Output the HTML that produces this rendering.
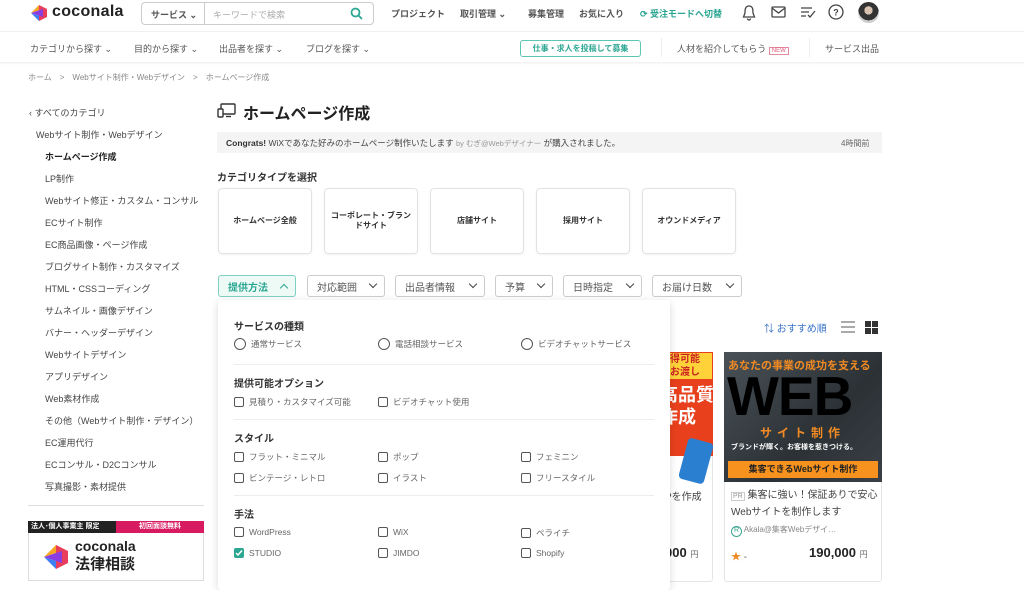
<!DOCTYPE html>
<html><head><meta charset="utf-8"><style>
*{margin:0;padding:0;box-sizing:border-box}
body{width:1024px;height:571px;overflow:hidden;background:#fff;font-family:"Liberation Sans","Noto Sans CJK JP",sans-serif;color:#333;position:relative}
.a{position:absolute;white-space:nowrap}
.s{font-size:9px}
.g{color:#555}
.b{font-weight:bold}
.side{font-size:9px;color:#444}
.tile{position:absolute;top:188px;width:94px;height:66px;border:1px solid #e2e2e2;border-radius:4px;font-size:8px;font-weight:bold;display:flex;align-items:center;justify-content:center;text-align:center;line-height:1.3;box-shadow:0 1px 2px rgba(0,0,0,.05)}
.flt{position:absolute;top:275px;height:22px;border:1px solid #ccc;border-radius:3px;font-size:10px;color:#555;display:flex;align-items:center;padding-left:9px}
.flt i{position:absolute;right:8px;top:5px;width:6px;height:6px;border-right:1.6px solid #444;border-bottom:1.6px solid #444;transform:rotate(45deg)}
.h{position:absolute;font-size:10px;font-weight:bold;color:#333}
.o{position:absolute;font-size:8.5px;color:#666;display:flex;align-items:center;white-space:nowrap}
.o b{display:inline-block;width:10px;height:10px;border:1.4px solid #555;border-radius:2px;margin-right:5px}
.o u{display:inline-block;width:12px;height:12px;border:1.4px solid #555;border-radius:50%;margin-right:5px}
.hr{position:absolute;left:234px;width:420px;height:1px;background:#eee}
</style></head><body>
<!-- header -->
<svg class="a" style="left:29px;top:4px" width="20" height="18" viewBox="0 0 20 18"><path d="M2 9 L10 1 L14 5 Z" fill="#f5a623"/><path d="M2 9 L10 17 L14 13 Z" fill="#3b7ff0"/><path d="M10 1 L18 5 L18 13 L10 17 Z" fill="#e83e5b"/><path d="M2 9 L14 5 L14 13Z" fill="#8a3de0"/></svg>
<div class="a" style="left:52px;top:3px;font-size:16px;font-weight:bold;color:#222;letter-spacing:.3px">coconala</div>
<div class="a" style="left:141px;top:2px;width:233px;height:23px;border:1px solid #ccc;border-radius:4px"></div>
<div class="a" style="left:204px;top:3px;width:1px;height:21px;background:#ccc"></div>
<div class="a s b g" style="left:151px;top:8px">サービス ⌄</div>
<div class="a s" style="left:213px;top:8px;color:#aaa">キーワードで検索</div>
<svg class="a" style="left:350px;top:7px" width="13" height="13" viewBox="0 0 13 13"><circle cx="5.5" cy="5.5" r="4" stroke="#2aa692" stroke-width="1.8" fill="none"/><path d="M8.5 8.5 L12 12" stroke="#2aa692" stroke-width="1.8"/></svg>
<div class="a s b g" style="left:391px;top:7px">プロジェクト</div>
<div class="a s b g" style="left:460px;top:7px">取引管理 ⌄</div>
<div class="a s b g" style="left:528px;top:7px">募集管理</div>
<div class="a s b g" style="left:579px;top:7px">お気に入り</div>
<div class="a s b" style="left:640px;top:7px;color:#2aa692">⟳ 受注モードへ切替</div>
<svg class="a" style="left:742px;top:5px" width="14" height="16" viewBox="0 0 14 16"><path d="M7 1 C3 1 3 5 3 8 L1.5 12 H12.5 L11 8 C11 5 11 1 7 1Z M5.5 13.5 A1.5 1.5 0 0 0 8.5 13.5" stroke="#444" stroke-width="1.3" fill="none"/></svg>
<svg class="a" style="left:771px;top:6px" width="15" height="12" viewBox="0 0 15 12"><rect x="1" y="1" width="13" height="10" rx="1" stroke="#444" stroke-width="1.3" fill="none"/><path d="M1 2 L7.5 7 L14 2" stroke="#444" stroke-width="1.3" fill="none"/></svg>
<svg class="a" style="left:800px;top:6px" width="16" height="12" viewBox="0 0 16 12"><path d="M1 2H12M1 6H9M1 10H6M8 9L10 11L15 5" stroke="#444" stroke-width="1.3" fill="none"/></svg>
<svg class="a" style="left:828px;top:4px" width="16" height="16" viewBox="0 0 16 16"><circle cx="8" cy="8" r="7" stroke="#444" stroke-width="1.3" fill="none"/><text x="8" y="11.5" font-size="9" text-anchor="middle" fill="#444" font-family="Liberation Sans" font-weight="bold">?</text></svg>
<div class="a" style="left:858px;top:2px;width:21px;height:21px;border-radius:50%;background:radial-gradient(circle at 50% 40%,#d9c3b0 0 25%,#333 26% 60%,#ccc 61%)"></div>
<div class="a" style="left:0;top:31px;width:1024px;height:1px;background:#f0f0f0"></div>
<div class="a s g" style="left:30px;top:42px">カテゴリから探す ⌄</div>
<div class="a s g" style="left:134px;top:42px">目的から探す ⌄</div>
<div class="a s g" style="left:219px;top:42px">出品者を探す ⌄</div>
<div class="a s g" style="left:306px;top:42px">ブログを探す ⌄</div>
<div class="a" style="left:520px;top:40px;width:121px;height:17px;border:1.2px solid #5cc6b4;border-radius:3px;font-size:8px;font-weight:bold;color:#2aa692;text-align:center;line-height:15px">仕事・求人を投稿して募集</div>
<div class="a" style="left:661px;top:38px;width:1px;height:19px;background:#eee"></div>
<div class="a s g" style="left:677px;top:42px">人材を紹介してもらう <span style="font-size:6px;color:#e05a7a;border:1px solid #e58aa0;padding:0 2px">NEW</span></div>
<div class="a" style="left:809px;top:38px;width:1px;height:19px;background:#eee"></div>
<div class="a s g" style="left:825px;top:42px">サービス出品</div>
<div class="a" style="left:0;top:62px;width:1024px;height:3px;background:linear-gradient(#f0f0f0,#fff)"></div>
<div class="a" style="left:28px;top:72px;font-size:8px;color:#888">ホーム　&gt;　Webサイト制作・Webデザイン　&gt;　ホームページ作成</div>
<!-- sidebar -->
<div class="a side" style="left:29px;top:106px">‹ すべてのカテゴリ</div>
<div class="a side" style="left:36px;top:128px">Webサイト制作・Webデザイン</div>
<div class="a side b" style="left:45px;top:150px;color:#222">ホームページ作成</div>
<div class="a side" style="left:45px;top:172px">LP制作</div>
<div class="a side" style="left:45px;top:194px">Webサイト修正・カスタム・コンサル</div>
<div class="a side" style="left:45px;top:216px">ECサイト制作</div>
<div class="a side" style="left:45px;top:238px">EC商品画像・ページ作成</div>
<div class="a side" style="left:45px;top:260px">ブログサイト制作・カスタマイズ</div>
<div class="a side" style="left:45px;top:282px">HTML・CSSコーディング</div>
<div class="a side" style="left:45px;top:304px">サムネイル・画像デザイン</div>
<div class="a side" style="left:45px;top:326px">バナー・ヘッダーデザイン</div>
<div class="a side" style="left:45px;top:348px">Webサイトデザイン</div>
<div class="a side" style="left:45px;top:370px">アプリデザイン</div>
<div class="a side" style="left:45px;top:392px">Web素材作成</div>
<div class="a side" style="left:45px;top:414px">その他（Webサイト制作・デザイン）</div>
<div class="a side" style="left:45px;top:436px">EC運用代行</div>
<div class="a side" style="left:45px;top:458px">ECコンサル・D2Cコンサル</div>
<div class="a side" style="left:45px;top:480px">写真撮影・素材提供</div>
<div class="a" style="left:28px;top:505px;width:176px;height:1px;background:#ddd"></div>
<div class="a" style="left:28px;top:521px;width:176px;height:60px;border:1px solid #ddd"></div>
<div class="a" style="left:28px;top:521px;width:88px;height:12px;background:#222;color:#fff;font-size:7px;font-weight:bold;padding-left:3px;line-height:12px">法人･個人事業主 限定</div>
<div class="a" style="left:116px;top:521px;width:88px;height:12px;background:#d81b60;color:#fff;font-size:7px;font-weight:bold;text-align:center;line-height:12px">初回面談無料</div>
<svg class="a" style="left:41px;top:542px" width="30" height="30" viewBox="0 0 20 18"><path d="M2 9 L10 1 L14 5 Z" fill="#f5a623"/><path d="M2 9 L10 17 L14 13 Z" fill="#3b7ff0"/><path d="M10 1 L18 5 L18 13 L10 17 Z" fill="#e83e5b"/><path d="M2 9 L14 5 L14 13Z" fill="#8a3de0"/></svg>
<div class="a" style="left:75px;top:538px;font-size:14px;font-weight:bold;color:#222">coconala</div>
<div class="a" style="left:75px;top:553px;font-size:15px;font-weight:bold;color:#222">法律相談</div>
<!-- main -->
<svg class="a" style="left:217px;top:103px" width="19" height="15" viewBox="0 0 19 15"><rect x="4" y="1" width="14" height="10" rx="1" stroke="#333" stroke-width="1.4" fill="none"/><rect x="1" y="6" width="5" height="8" rx="1" stroke="#333" stroke-width="1.4" fill="#fff"/><path d="M9 13.5H14" stroke="#333" stroke-width="1.4"/></svg>
<div class="a" style="left:243px;top:100px;font-size:16px;font-weight:bold;color:#222">ホームページ作成</div>
<div class="a" style="left:217px;top:132px;width:665px;height:21px;background:#f4f4f4"></div>
<div class="a" style="left:226px;top:137px;font-size:8.5px;color:#444"><b style="color:#333">Congrats!</b> WiXであなた好みのホームページ制作いたします <span style="color:#999;font-size:7.5px">by むぎ@Webデザイナー</span> が購入されました。</div>
<div class="a" style="left:841px;top:138px;font-size:8px;color:#666">4時間前</div>
<div class="a" style="left:217px;top:169px;font-size:10px;font-weight:bold;color:#333">カテゴリタイプを選択</div>
<div class="tile" style="left:218px">ホームページ全般</div>
<div class="tile" style="left:324px">コーポレート・ブラン<br>ドサイト</div>
<div class="tile" style="left:430px">店舗サイト</div>
<div class="tile" style="left:536px">採用サイト</div>
<div class="tile" style="left:642px">オウンドメディア</div>
<div class="flt" style="left:218px;width:78px;background:#eefaf6;border-color:#7fd0c0;color:#2aa692;font-weight:bold">提供方法<i style="transform:rotate(-135deg);top:9px;border-color:#2aa692"></i></div>
<div class="flt" style="left:307px;width:78px">対応範囲<i></i></div>
<div class="flt" style="left:395px;width:90px">出品者情報<i></i></div>
<div class="flt" style="left:495px;width:58px">予算<i></i></div>
<div class="flt" style="left:563px;width:79px">日時指定<i></i></div>
<div class="flt" style="left:652px;width:90px">お届け日数<i></i></div>
<!-- sort -->
<div class="a" style="left:764px;top:320px;font-size:10px;color:#3a74c9">⇅ おすすめ順</div>
<div class="a" style="left:841px;top:321px;width:14px;height:12px;background:repeating-linear-gradient(#aaa 0 2px,transparent 2px 5px)"></div>
<div class="a" style="left:865px;top:321px;width:13px;height:13px;background:linear-gradient(90deg,#333 0 6px,transparent 6px 7px,#333 7px),#333;"><div style="position:absolute;left:6px;top:0;width:1px;height:13px;background:#fff"></div><div style="position:absolute;left:0;top:6px;width:13px;height:1px;background:#fff"></div></div>
<!-- cards -->
<div class="a" style="left:600px;top:352px;width:113px;height:230px;border:1px solid #e5e5e5;border-radius:3px"></div>
<div class="a" style="left:600px;top:352px;width:113px;height:104px;background:#e8401c"></div>
<div class="a" style="left:660px;top:353px;width:52px;height:26px;background:#ffd23a;font-size:10px;font-weight:bold;color:#c22;line-height:13px">取得可能<br>もお渡し</div>
<div class="a" style="left:660px;top:384px;font-size:18px;font-weight:bold;color:#fff;line-height:22px">高品質<br>作成</div>
<div class="a" style="left:683px;top:440px;width:26px;height:42px;background:#2a7fd0;border-radius:4px;transform:rotate(15deg)"></div>
<div class="a" style="left:665px;top:488px;font-size:10px;color:#444">Pを作成</div>
<div class="a" style="left:665px;top:545px;font-size:13px;font-weight:bold;color:#222">000 <span style="font-size:8px;font-weight:normal;color:#666">円</span></div>
<div class="a" style="left:724px;top:352px;width:158px;height:230px;border:1px solid #e5e5e5;border-radius:3px"></div>
<div class="a" style="left:724px;top:352px;width:158px;height:130px;background:linear-gradient(135deg,#4a5258,#2b3135 60%,#3a4045)"></div>
<div class="a" style="left:728px;top:357px;font-size:11px;font-weight:bold;color:#f08a24">あなたの事業の成功を支える</div>
<div class="a" style="left:727px;top:364px;font-size:55px;font-weight:bold;color:#000;letter-spacing:-1px;font-family:'Liberation Sans',sans-serif">WEB</div>
<div class="a" style="left:760px;top:424px;font-size:12px;font-weight:bold;color:#f08a24;letter-spacing:5px">サイト制作</div>
<div class="a" style="left:731px;top:442px;font-size:7px;font-weight:bold;color:#fff">ブランドが輝く。お客様を惹きつける。</div>
<div class="a" style="left:728px;top:461px;width:150px;height:17px;background:#f7921e;font-size:9px;font-weight:bold;color:#222;text-align:center;line-height:17px">集客できるWebサイト制作</div>
<div class="a" style="left:731px;top:488px;font-size:10px;color:#444;line-height:16px;white-space:normal;width:148px"><span style="font-size:7px;color:#999;border:1px solid #ccc;padding:0 1px">PR</span> 集客に強い！保証ありで安心Webサイトを制作します</div>
<div class="a" style="left:731px;top:524px;font-size:8px;color:#888"><span style="display:inline-block;width:11px;height:11px;border:1.4px solid #3aa58e;border-radius:50%;color:#3aa58e;font-size:7px;text-align:center;line-height:8px">R</span> Akala@集客Webデザイ…</div>
<div class="a" style="left:731px;top:548px;font-size:10px;color:#f08a24">★ <span style="color:#666">-</span></div>
<div class="a" style="left:809px;top:545px;font-size:13px;font-weight:bold;color:#222">190,000 <span style="font-size:8px;font-weight:normal;color:#666">円</span></div>
<!-- dropdown panel -->
<div class="a" style="left:218px;top:300px;width:452px;height:290px;background:#fff;box-shadow:0 2px 8px rgba(0,0,0,.15);border-radius:3px"></div>
<div class="h" style="left:234px;top:318px">サービスの種類</div>
<div class="o" style="left:234px;top:338px"><u></u>通常サービス</div>
<div class="o" style="left:378px;top:338px"><u></u>電話相談サービス</div>
<div class="o" style="left:521px;top:338px"><u></u>ビデオチャットサービス</div>
<div class="hr" style="top:364px"></div>
<div class="h" style="left:234px;top:375px">提供可能オプション</div>
<div class="o" style="left:234px;top:396px"><b></b>見積り・カスタマイズ可能</div>
<div class="o" style="left:378px;top:396px"><b></b>ビデオチャット使用</div>
<div class="hr" style="top:419px"></div>
<div class="h" style="left:234px;top:430px">スタイル</div>
<div class="o" style="left:234px;top:451px"><b></b>フラット・ミニマル</div>
<div class="o" style="left:378px;top:451px"><b></b>ポップ</div>
<div class="o" style="left:521px;top:451px"><b></b>フェミニン</div>
<div class="o" style="left:234px;top:472px"><b></b>ビンテージ・レトロ</div>
<div class="o" style="left:378px;top:472px"><b></b>イラスト</div>
<div class="o" style="left:521px;top:472px"><b></b>フリースタイル</div>
<div class="hr" style="top:495px"></div>
<div class="h" style="left:234px;top:506px">手法</div>
<div class="o" style="left:234px;top:527px"><b></b>WordPress</div>
<div class="o" style="left:378px;top:527px"><b></b>WiX</div>
<div class="o" style="left:521px;top:527px"><b></b>ペライチ</div>
<div class="o" style="left:234px;top:548px"><b style="background:#2aa692;border-color:#2aa692;position:relative"><svg style="position:absolute;left:0;top:0" width="8" height="8" viewBox="0 0 8 8"><path d="M1 4L3 6L7 1.5" stroke="#fff" stroke-width="1.5" fill="none"/></svg></b>STUDIO</div>
<div class="o" style="left:378px;top:548px"><b></b>JIMDO</div>
<div class="o" style="left:521px;top:548px"><b></b>Shopify</div>
</body></html>
